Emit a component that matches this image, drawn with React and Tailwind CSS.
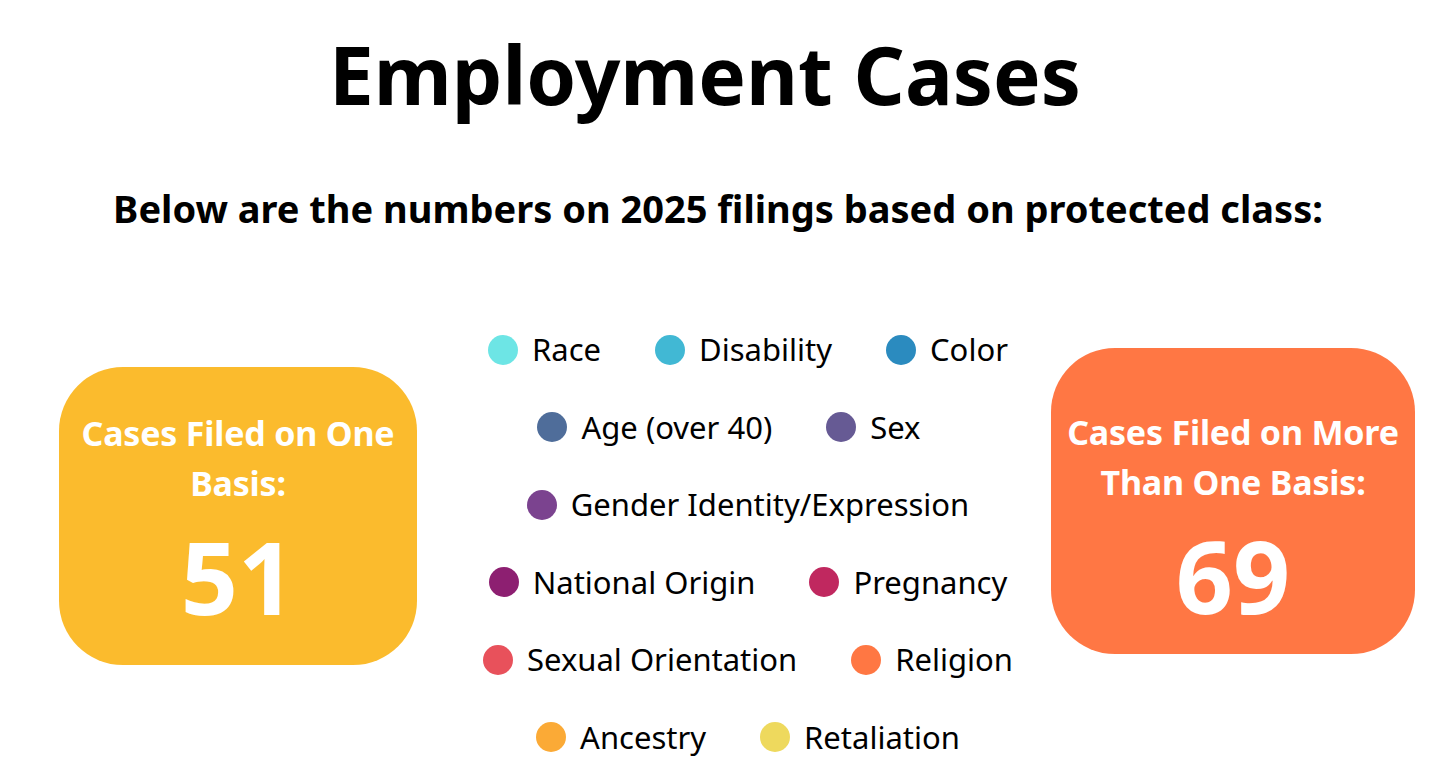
const legendRows = [
  [
    { label: 'Race', color: 'bg-[#6de5e5]' },
    { label: 'Disability', color: 'bg-[#41b8d4]' },
    { label: 'Color', color: 'bg-[#2b8bbf]' },
  ],
  [
    { label: 'Age (over 40)', color: 'bg-[#4f6d9a]' },
    { label: 'Sex', color: 'bg-[#665a94]' },
  ],
  [{ label: 'Gender Identity/Expression', color: 'bg-[#7b438f]' }],
  [
    { label: 'National Origin', color: 'bg-[#8d1f71]' },
    { label: 'Pregnancy', color: 'bg-[#c0285f]' },
  ],
  [
    { label: 'Sexual Orientation', color: 'bg-[#e8515b]' },
    { label: 'Religion', color: 'bg-[#ff7743]' },
  ],
  [
    { label: 'Ancestry', color: 'bg-[#fbaa36]' },
    { label: 'Retaliation', color: 'bg-[#eed95d]' },
  ],
]

function LegendItem({ label, color }) {
  return (
    <div className="flex items-center gap-[14px]">
      <span className={`block w-[30px] h-[30px] rounded-full ${color}`} />
      <span className="text-[31px] leading-none text-black">{label}</span>
    </div>
  )
}

function StatBox({ title, value, className }) {
  return (
    <div
      className={`flex flex-col items-center rounded-[64px] text-white ${className}`}
    >
      {title.map((line) => (
        <div key={line} className="text-[34px] font-bold leading-[50px] tracking-[-0.2px]">
          {line}
        </div>
      ))}
      <div className="text-[100px] font-bold leading-none mt-[18px]">{value}</div>
    </div>
  )
}

export default function App() {
  return (
    <div
      className="w-[1456px] h-[783px] bg-white overflow-hidden"
      style={{ fontFamily: '"Noto Sans", "Open Sans", sans-serif' }}
    >
      <h1 className="text-center pr-[46px] pt-[24px] text-[80px] font-bold leading-[100px] text-black">
        Employment Cases
      </h1>
      <p className="text-center pr-[20px] mt-[60px] text-[38px] font-bold leading-[48px] text-black">
        Below are the numbers on 2025 filings based on protected class:
      </p>

      <div className="flex items-start mt-[79px]">
        <StatBox
          title={['Cases Filed on One', 'Basis:']}
          value="51"
          className="ml-[59px] mt-[56px] w-[358px] h-[298px] pt-[41px] bg-[#fbbb2d]"
        />

        <div className="flex-1 pl-[28px] flex flex-col">
          {legendRows.map((row, i) => (
            <div
              key={i}
              className={`h-[77.5px] flex items-center justify-center gap-[54px] ${i === 1 ? 'pr-[38px]' : ''}`}
            >
              {row.map((item) => (
                <LegendItem key={item.label} {...item} />
              ))}
            </div>
          ))}
        </div>

        <StatBox
          title={['Cases Filed on More', 'Than One Basis:']}
          value="69"
          className="mr-[41px] mt-[37px] w-[364px] h-[306px] pt-[59px] bg-[#ff7744]"
        />
      </div>
    </div>
  )
}
